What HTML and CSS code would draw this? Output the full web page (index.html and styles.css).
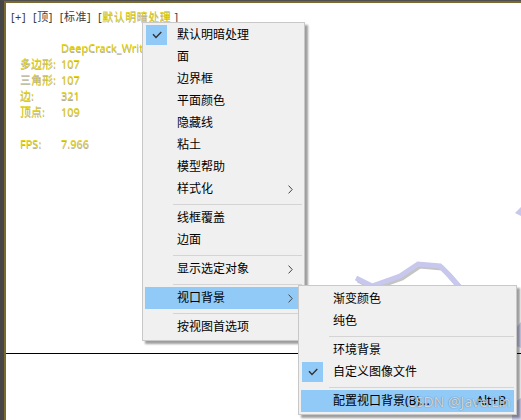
FILE: index.html
```html
<!DOCTYPE html>
<html lang="zh">
<head>
<meta charset="utf-8">
<title>Viewport</title>
<link rel="stylesheet" href="styles.css">
</head>
<body>
<div class="viewport">
  <div class="frame">
    <div class="labels">
      <span>[+]</span>
      <span>[顶]</span>
      <span>[标准]</span>
      <span>[<span class="hl">默认明暗处理</span> ]</span>
    </div>
    <div class="stats">
      <span></span><span>DeepCrack_WriteMask</span>
      <span>多边形:</span><span>107</span>
      <span>三角形:</span><span>107</span>
      <span>边:</span><span>321</span>
      <span>顶点:</span><span>109</span>
      <span></span><span></span>
      <span>FPS:</span><span>7.966</span>
    </div>
    <div class="hline"></div>
  </div>
</div>

<svg class="model" width="521" height="420" viewBox="0 0 521 420">
  <polyline points="356,278 372,286 400,276 418,264 440,266 448,274 462,290" fill="none" stroke="#c4c4c4" stroke-width="5" transform="translate(2,2)"/>
  <polyline points="356,278 372,286 400,276 418,264 440,266 448,274 462,290" fill="none" stroke="#c8c8ee" stroke-width="5"/>
  <polygon points="515,213 521,207 521,216" fill="#c8c8ee"/>
  <polygon points="514,330 521,322 521,348 514,345" fill="#d4d4f2"/>
  <polygon points="512,404 521,398 521,420 512,420" fill="#d0d0f0"/>
</svg>

<div class="menu main">
  <div class="item"><span class="check"><svg width="10" height="8" viewBox="0 0 10 8"><path d="M1 3.2 L4 6.5 L9.3 1" fill="none" stroke="#333" stroke-width="1.4"/></svg></span>默认明暗处理</div>
  <div class="item">面</div>
  <div class="item">边界框</div>
  <div class="item">平面颜色</div>
  <div class="item">隐藏线</div>
  <div class="item">粘土</div>
  <div class="item">模型帮助</div>
  <div class="item">样式化<svg class="arrow" width="5" height="9" viewBox="0 0 5 9"><path d="M0.6 0.6 L4.2 4.5 L0.6 8.4" fill="none" stroke="#444" stroke-width="1"/></svg></div>
  <div class="sep"></div>
  <div class="item">线框覆盖</div>
  <div class="item">边面</div>
  <div class="sep"></div>
  <div class="item">显示选定对象<svg class="arrow" width="5" height="9" viewBox="0 0 5 9"><path d="M0.6 0.6 L4.2 4.5 L0.6 8.4" fill="none" stroke="#444" stroke-width="1"/></svg></div>
  <div class="sep"></div>
  <div class="item active">视口背景<svg class="arrow" width="5" height="9" viewBox="0 0 5 9"><path d="M0.6 0.6 L4.2 4.5 L0.6 8.4" fill="none" stroke="#444" stroke-width="1"/></svg></div>
  <div class="sep"></div>
  <div class="item">按视图首选项</div>
</div>

<div class="menu sub">
  <div class="item">渐变颜色</div>
  <div class="item">纯色</div>
  <div class="sep"></div>
  <div class="item">环境背景</div>
  <div class="item"><span class="check"><svg width="10" height="8" viewBox="0 0 10 8"><path d="M1 3.2 L4 6.5 L9.3 1" fill="none" stroke="#333" stroke-width="1.4"/></svg></span>自定义图像文件</div>
  <div class="sep"></div>
  <div class="item active">配置视口背景(B)...<span class="shortcut">Alt+B</span></div>
</div>

<div class="watermark">CSDN @Jave.Lin</div>
</body>
</html>
```

FILE: styles.css
```css
body {
  margin: 0;
  width: 521px;
  height: 420px;
  overflow: hidden;
  position: relative;
  background: #ffffff;
  font-family: "Noto Sans", "Noto Sans CJK SC", sans-serif;
}

.viewport {
  box-sizing: border-box;
  height: 420px;
  border-top: 1px solid #4f4f4f;
  border-left: 4px solid #464646;
}

.frame {
  box-sizing: border-box;
  height: 100%;
  border-top: 2px solid #7b6a2e;
  border-left: 2px solid #7b6a2e;
}

.labels {
  display: flex;
  gap: 7px;
  padding: 7px 0 0 5px;
  font-size: 11px;
  line-height: 14px;
  color: #3c3c3c;
  letter-spacing: 0.5px;
}

.hl {
  color: #e2d014;
  text-shadow: 0 1px 0 rgba(80, 70, 0, 0.45);
}

.stats {
  display: grid;
  grid-template-columns: 41px auto;
  grid-auto-rows: 16px;
  margin: 16px 0 0 14px;
  font-size: 11px;
  line-height: 16px;
  color: #e2d014;
  text-shadow: 0 1px 0 rgba(80, 70, 0, 0.45);
  white-space: nowrap;
}

.hline {
  margin-top: 201px;
  height: 1px;
  background: #000000;
}

.model {
  position: absolute;
  left: 0;
  top: 0;
}

.menu {
  position: absolute;
  background: #f0f0f0;
  border: 1px solid #c8c8c8;
  box-shadow: 3px 3px 2px rgba(0, 0, 0, 0.38);
  padding: 1px 0 2px;
  font-size: 12px;
  color: #000000;
}

.main {
  left: 142px;
  top: 22px;
  width: 161px;
}

.sub {
  left: 298px;
  top: 285px;
  width: 217px;
  padding-top: 2px;
}

.item {
  position: relative;
  height: 22px;
  margin: 0 2px;
  padding-left: 32px;
  display: flex;
  align-items: center;
  line-height: 22px;
  white-space: nowrap;
}

.item.active {
  background: #91c9f7;
}

.check {
  position: absolute;
  left: 1px;
  top: 1px;
  width: 21px;
  height: 20px;
  background: #91c9f7;
  display: flex;
  align-items: center;
  justify-content: center;
}

.arrow {
  position: absolute;
  right: 9px;
  top: 7px;
}

.sep {
  height: 1px;
  margin: 4px 2px 2px 30px;
  background: #d4d4d4;
}

.shortcut {
  margin-left: auto;
  padding-right: 8px;
}

.watermark {
  position: absolute;
  left: 407px;
  top: 393px;
  font-size: 14px;
  line-height: 18px;
  color: rgba(255, 255, 255, 0.72);
  text-shadow: 0 0 1px rgba(0, 0, 0, 0.55);
  white-space: nowrap;
}
```
